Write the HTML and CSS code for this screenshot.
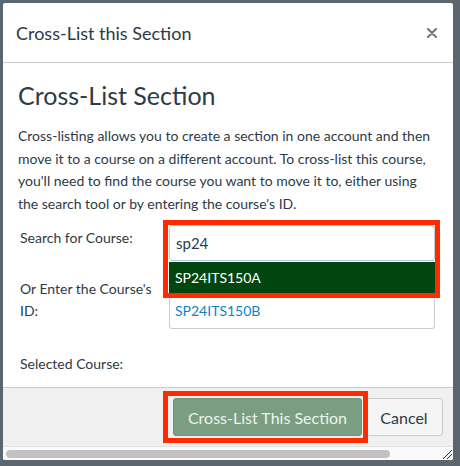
FILE: index.html
```html
<!DOCTYPE html>
<html lang="en">
<head>
  <meta charset="UTF-8" />
  <title>Cross-List this Section</title>
  <link rel="stylesheet" href="styles.css">
</head>
<body>

  <div class="dialog">
    <!-- Title bar -->
    <div class="dialog-header">
      <span class="dialog-title">Cross-List this Section</span>
      <svg class="close-icon" width="10" height="10" viewBox="0 0 10 10">
        <path d="M1 1 L9 9 M9 1 L1 9" stroke="#6b7780" stroke-width="2" stroke-linecap="round"/>
      </svg>
    </div>

    <!-- Content -->
    <div class="dialog-body">
      <h2>Cross-List Section</h2>
      <p class="intro">Cross-listing allows you to create a section in one account and then move it to a course on a different account. To cross-list this course, you'll need to find the course you want to move it to, either using the search tool or by entering the course's ID.</p>

      <div class="form-row">
        <label>Search for Course:</label>
        <div class="search-wrap">
          <input type="text" value="sp24" />
          <div class="menu">
            <div class="menu-item active">SP24ITS150A</div>
            <div class="menu-item">SP24ITS150B</div>
          </div>
          <div class="highlight search-mark"></div>
        </div>
      </div>

      <div class="form-row id-row">
        <label>Or Enter the Course's ID:</label>
        <div><input type="text" /></div>
      </div>

      <div class="form-row selected-row">
        <label>Selected Course:</label>
      </div>
    </div>

    <!-- Buttons -->
    <div class="dialog-footer">
      <div class="btn-wrap">
        <button class="btn btn-primary">Cross-List This Section</button>
        <div class="highlight button-mark"></div>
      </div>
      <button class="btn btn-cancel">Cancel</button>
    </div>

    <!-- Horizontal scrollbar -->
    <div class="scroll-strip">
      <div class="scroll-thumb"></div>
      <svg class="grip" width="10" height="10" viewBox="0 0 10 10">
        <path d="M1 10 L10 1 M5 10 L10 5" stroke="#333" stroke-width="1"/>
      </svg>
    </div>
  </div>

</body>
</html>
```

FILE: styles.css
```css
body {
  margin: 0;
  padding: 3px;
  background: #5a6670;
  font-family: Lato, 'Liberation Sans', sans-serif;
  color: #2d3b45;
}
.dialog {
  width: 450px;
  height: 457px;
  background: white;
  border-radius: 2px;
  display: flex;
  flex-direction: column;
  overflow: hidden;
}
.dialog-header {
  height: 59px;
  padding: 0 16px 0 13px;
  border-bottom: 1px solid #c7cdd1;
  display: flex;
  align-items: center;
  justify-content: space-between;
  flex-shrink: 0;
}
.dialog-title {
  font-size: 18px;
}
.dialog-body {
  flex: 1;
  padding: 17px 15px 0 15px;
}
h2 {
  font-size: 25px;
  font-weight: normal;
  line-height: 31px;
  margin: 0 0 14px 0;
}
.intro {
  font-size: 14px;
  line-height: 22.5px;
  margin: 0 0 10px 0;
}
.form-row {
  display: flex;
  padding-left: 2px;
  font-size: 14px;
  line-height: 22px;
}
.form-row label {
  width: 149px;
  padding-right: 8px;
  box-sizing: border-box;
  padding-top: 2px;
}
input[type="text"] {
  width: 266px;
  height: 36px;
  box-sizing: border-box;
  border: 1px solid #c7cdd1;
  border-bottom-color: #a9c8de;
  border-radius: 3px;
  padding: 0 6px;
  font-family: Lato, 'Liberation Sans', sans-serif;
  font-size: 15px;
  color: #2d3b45;
}
.search-wrap {
  position: relative;
}
.menu {
  position: absolute;
  top: 37px;
  left: 0;
  width: 266px;
  background: white;
  border: 1px solid #c7cdd1;
  border-top: none;
  border-radius: 0 0 3px 3px;
  box-sizing: border-box;
  z-index: 2;
}
.menu-item {
  height: 35px;
  line-height: 35px;
  padding: 0 5px;
  font-size: 14px;
  color: #0b84c3;
}
.menu-item.active {
  height: 31px;
  line-height: 31px;
  margin: 0 -1px;
  padding: 0 6px;
  background: #03450f;
  color: white;
}
.highlight {
  position: absolute;
  border: 5px solid #ff2a00;
  z-index: 3;
}
.search-mark {
  top: -5px;
  left: -6px;
  width: 267px;
  height: 68px;
}
.id-row {
  margin-top: 17px;
}
.id-row label {
  padding-top: 0;
}
.selected-row {
  margin-top: 29px;
}
.dialog-footer {
  height: 59px;
  box-sizing: border-box;
  border-top: 1px solid #c7cdd1;
  background: #f0f0f0;
  display: flex;
  justify-content: flex-end;
  align-items: center;
  gap: 3px;
  padding: 0 10px;
  flex-shrink: 0;
}
.btn-wrap {
  position: relative;
}
.btn {
  height: 38px;
  border-radius: 3px;
  font-family: Lato, 'Liberation Sans', sans-serif;
  font-size: 16px;
  cursor: pointer;
}
.btn-primary {
  display: block;
  width: 189px;
  background: #7b9e83;
  border: 1px solid #6f9377;
  color: #eef3ef;
}
.btn-cancel {
  width: 78px;
  background: #f5f5f5;
  border: 1px solid #c7cdd1;
  color: #2d3b45;
}
.button-mark {
  top: -7px;
  left: -10px;
  right: -6px;
  bottom: -7px;
}
.scroll-strip {
  height: 13px;
  flex-shrink: 0;
  display: flex;
  align-items: center;
  justify-content: space-between;
  padding: 0 1px 0 3px;
  border-top: 1px solid #e2e2e2;
  background: #fafafa;
}
.scroll-thumb {
  width: 384px;
  height: 8px;
  border-radius: 4px;
  background: #c1c1c1;
}
.grip {
  align-self: flex-end;
  margin-bottom: 1px;
}
```
